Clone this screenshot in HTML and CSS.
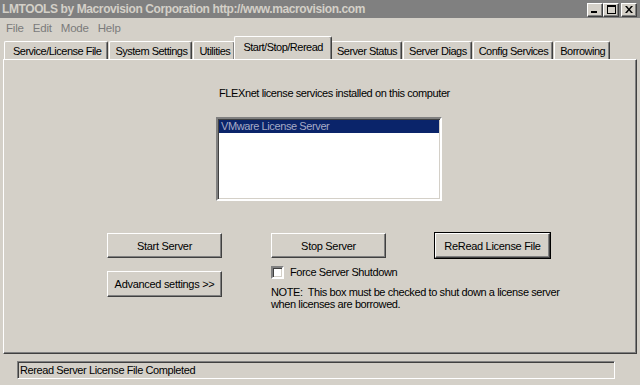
FILE: index.html
```html
<!DOCTYPE html>
<html lang="en">
<head>
    <meta charset="UTF-8">
    <title>LMTOOLS</title>
    <link rel="stylesheet" href="styles.css">
</head>
<body>
    <div class="window">
        <div class="titlebar">
            <span class="caption">LMTOOLS by Macrovision Corporation http://www.macrovision.com</span>
            <div class="capbtns">
                <span class="capbtn">
                    <svg width="8" height="7" viewBox="0 0 8 7"><rect x="0" y="5" width="6" height="2" fill="#000"/></svg>
                </span>
                <span class="capbtn">
                    <svg width="9" height="9" viewBox="0 0 9 9"><rect x="0.5" y="0.5" width="8" height="8" fill="none" stroke="#000"/><rect x="0" y="0" width="9" height="2" fill="#000"/></svg>
                </span>
                <span class="capbtn close">
                    <svg width="8" height="7" viewBox="0 0 8 7"><path d="M0 0h2l2 2.5L6 0h2L5 3.5 8 7H6L4 4.5 2 7H0l3-3.5z" fill="#000"/></svg>
                </span>
            </div>
        </div>

        <div class="menubar">
            <span>File</span>
            <span>Edit</span>
            <span>Mode</span>
            <span>Help</span>
        </div>

        <div class="tabs">
            <span class="tab">Service/License File</span>
            <span class="tab">System Settings</span>
            <span class="tab">Utilities</span>
            <span class="tab active">Start/Stop/Reread</span>
            <span class="tab">Server Status</span>
            <span class="tab">Server Diags</span>
            <span class="tab">Config Services</span>
            <span class="tab">Borrowing</span>
        </div>

        <div class="panel">
            <div class="services">
                <div class="label">FLEXnet license services installed on this computer</div>
                <div class="listbox">
                    <div class="item selected">VMware License Server</div>
                </div>
            </div>

            <div class="controls">
                <button class="btn start">Start Server</button>
                <button class="btn stop">Stop Server</button>
                <button class="btn reread default">ReRead License File</button>
                <button class="btn advanced">Advanced settings &gt;&gt;</button>
                <label class="check">
                    <span class="box"></span>
                    Force Server Shutdown
                </label>
                <div class="note">NOTE:&nbsp; This box must be checked to shut down a license server<br>when licenses are borrowed.</div>
            </div>
        </div>

        <div class="statusrow">
            <div class="status">Reread Server License File Completed</div>
        </div>
    </div>
</body>
</html>
```

FILE: styles.css
```css
body{
    margin: 0;
    padding: 0;

    background-color: #d4d0c8;

    font-family: 'Liberation Sans', Arial, sans-serif;
    font-size: 11px;
    letter-spacing: -0.4px;
    color: #000;
}

.window{
    width: 640px;
    height: 385px;

    display: flex;
    flex-direction: column;

    overflow: hidden;
}

.titlebar{
    height: 18px;
    padding: 0 3px 0 2px;

    display: flex;
    align-items: center;
    justify-content: space-between;

    background-color: #808080;
    color: #d4d0c8;

    font-weight: bold;
    font-size: 12px;
    letter-spacing: -0.4px;
}

.capbtns{
    display: flex;
    margin-top: 1px;
}

.capbtn{
    width: 14px;
    height: 12px;

    display: flex;
    align-items: center;
    justify-content: center;

    background-color: #d4d0c8;

    border: 1px solid;
    border-color: #fff #404040 #404040 #fff;
    box-shadow: inset -1px -1px #808080;
}

.capbtn.close{
    margin-left: 2px;
}

.menubar{
    height: 19px;
    padding-left: 6px;

    display: flex;
    align-items: center;
    gap: 9px;

    color: #7b7b7b;
    font-size: 11.5px;
    letter-spacing: -0.2px;
}

.tabs{
    height: 20px;
    margin-top: 2px;
    padding-left: 4px;

    display: flex;
    align-items: flex-end;
}

.tab{
    height: 17px;
    padding: 0 4px 0 5px;
    margin-right: 1px;

    display: flex;
    align-items: center;

    border: 1px solid;
    border-bottom: 0;
    border-color: #fff #404040 #fff #fff;
    border-radius: 2px 2px 0 0;
    box-shadow: inset -1px 0 #808080;

    letter-spacing: -0.5px;
    white-space: nowrap;
}

.tab:first-child{
    padding: 0 6px 0 8px;
}

.tab.active{
    height: 20px;
    margin: 0 -1px 0 -2px;
    padding: 0 8px 2px 8px;

    position: relative;
    z-index: 1;

    background-color: #d4d0c8;
}

.panel{
    height: 293px;
    margin: 0 3px;

    display: flex;
    flex-direction: column;

    border: 1px solid;
    border-color: #fff #404040 #404040 #fff;
    box-shadow: inset -1px -1px #808080;
}

.services{
    padding: 27px 0 0 212px;
}

.label{
    width: 230px;
    padding-left: 3px;
    line-height: 12px;
    white-space: nowrap;
}

.listbox{
    width: 222px;
    height: 80px;
    margin-top: 18px;

    background-color: #fff;

    border: 2px solid;
    border-color: #808080 #fff #fff #808080;
    box-shadow: inset 1px 1px #404040, inset -1px -1px #d4d0c8;
}

.item{
    height: 13px;
    margin: 1px 1px 0 1px;
    padding-left: 2px;

    line-height: 13px;
}

.item.selected{
    background-color: #0a246a;
    color: #a6abc6;
}

.controls{
    margin-top: 32px;
    padding-left: 103px;

    display: grid;
    grid-template-columns: 115px 115px 117px;
    grid-template-rows: 25px 20px auto;
    grid-template-areas:
        "start stop reread"
        "adv check ."
        "adv note .";
    column-gap: 49px;
}

.btn{
    margin: 0;
    padding: 0;

    background-color: #d4d0c8;

    border: 1px solid;
    border-color: #fff #404040 #404040 #fff;
    box-shadow: inset -1px -1px #808080;

    font-family: inherit;
    font-size: 11px;
    letter-spacing: -0.3px;
    color: #000;
}

.btn.default{
    outline: 1px solid #000;
    outline-offset: 0;
    box-shadow: inset -1px -1px #808080, inset 1px 1px #d4d0c8;
}

.start{ grid-area: start; }
.stop{ grid-area: stop; }
.reread{ grid-area: reread; width: 115px; }

.advanced{
    grid-area: adv;
    height: 26px;
    margin-top: 13px;
}

.check{
    grid-area: check;
    margin-top: 8px;

    display: flex;
    align-items: center;
    gap: 6px;

    white-space: nowrap;
}

.check .box{
    flex: none;
    width: 9px;
    height: 9px;

    background-color: #fff;

    border: 2px solid;
    border-color: #808080 #fff #fff #808080;
    box-shadow: inset 1px 1px #404040, inset -1px -1px #d4d0c8;
}

.note{
    grid-area: note;
    margin-top: 8px;

    line-height: 12px;
    white-space: nowrap;
}

.statusrow{
    padding: 7px 0 0 17px;
}

.status{
    width: 594px;
    height: 16px;
    padding-left: 2px;

    line-height: 16px;

    border: 1px solid;
    border-color: #808080 #fff #fff #808080;
    box-shadow: inset 1px 1px #404040;
}
```
